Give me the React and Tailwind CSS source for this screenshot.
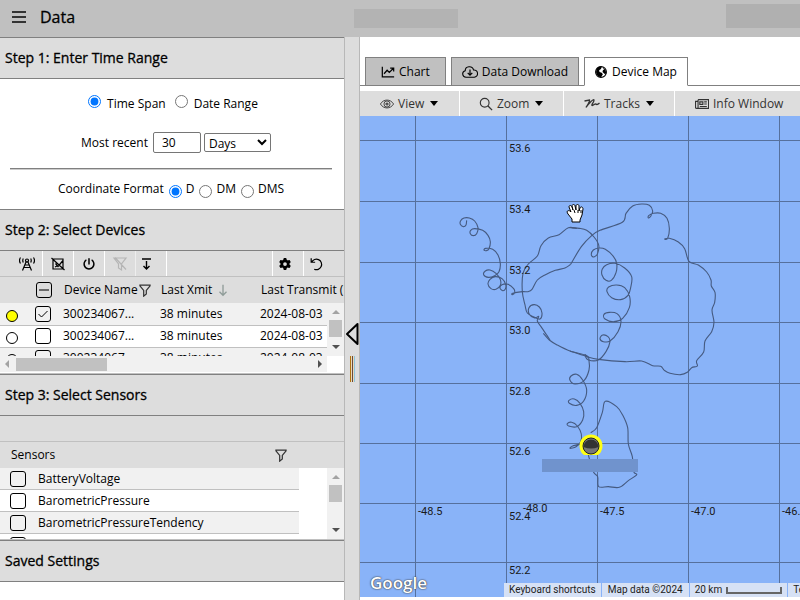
import React, { useState } from 'react';
import clsx from 'clsx';
import { FaGear, FaPowerOff } from 'react-icons/fa6';

const devices = [
  { id: 1, name: '300234067...', xmit: '38 minutes', date: '2024-08-03', active: true },
  { id: 2, name: '300234067...', xmit: '38 minutes', date: '2024-08-03', active: false },
  { id: 3, name: '300234067...', xmit: '38 minutes', date: '2024-08-03', active: false }
];

const sensors = ['BatteryVoltage', 'BarometricPressure', 'BarometricPressureTendency', 'AirTemperature'];

const meridians = [55, 146, 237, 328, 419];
const parallels = [24, 85, 146, 206, 267, 327, 387, 446];

const gridLabels = [
  ['53.6', 149, 36], ['53.4', 149, 97], ['53.2', 149, 158], ['53.0', 149, 218],
  ['52.8', 149, 279], ['52.6', 149, 339], ['52.4', 149, 404], ['52.2', 149, 458],
  ['-48.5', 58, 399], ['-48.0', 163, 396], ['-47.5', 240, 399], ['-47.0', 331, 399], ['-46.5', 422, 399]
];

// Drifter positions, in thirds of a map pixel from each track's origin
const tracks = [
  {
    origin: 'translate(80 79) scale(0.33333)',
    points: [
      [80, 76], [78, 90], [70, 95], [61, 88], [62, 77], [72, 69], [88, 69], [104, 78], [114, 98], [110, 116], [100, 122],
      [91, 116], [92, 106], [104, 101], [128, 106], [144, 121], [151, 140], [147, 161], [139, 167], [132, 165],
      [137, 160], [158, 163], [174, 180], [181, 206], [177, 230], [164, 242], [145, 247], [131, 239], [136, 228],
      [150, 225], [168, 235], [181, 254], [181, 271], [168, 283], [153, 281], [144, 267], [150, 253], [166, 245],
      [186, 251], [197, 268], [196, 282], [188, 287], [180, 279], [186, 269], [204, 268], [221, 281], [224, 293],
      [217, 299], [218, 295], [247, 290], [264, 290], [276, 283], [292, 255], [315, 240], [346, 226], [375, 219], [392, 208]
    ]
  },
  {
    origin: 'translate(80 79) scale(0.33333)',
    points: [
      [410, 100], [385, 98], [357, 119], [325, 129], [303, 152], [292, 183], [265, 207], [249, 235], [247, 290], [255, 330],
      [262, 354], [282, 366], [300, 372], [306, 354], [298, 336], [282, 329], [267, 338], [268, 358], [284, 369],
      [296, 364], [292, 378], [305, 398], [320, 420], [330, 435]
    ]
  },
  {
    origin: 'translate(210 79) scale(0.33333)',
    points: [
      [2, 208], [34, 155], [65, 122], [90, 106], [157, 82], [168, 55], [188, 33], [215, 27], [238, 31], [248, 48], [242, 64],
      [235, 69], [236, 62], [250, 55], [272, 55], [291, 70], [298, 100], [293, 130], [284, 132], [298, 130], [325, 141],
      [344, 161], [357, 199], [385, 210], [410, 231], [423, 255], [424, 273], [435, 292], [434, 322], [426, 345],
      [432, 382], [425, 410], [405, 438], [401, 471], [380, 497], [382, 513], [365, 518], [352, 532], [332, 539],
      [300, 535], [283, 526], [272, 514], [248, 512], [215, 498], [165, 500], [85, 493], [48, 484], [0, 468]
    ]
  },
  {
    origin: 'translate(210 79) scale(0.33333)',
    points: [
      [20, 100], [0, 98], [28, 100], [50, 106], [72, 126], [86, 150], [83, 175], [72, 186], [64, 180], [70, 165], [88, 159],
      [106, 163], [130, 184], [140, 205], [138, 233], [124, 256], [108, 256], [96, 240], [97, 222], [110, 209],
      [135, 205], [164, 219], [185, 245], [182, 278], [174, 301], [152, 314], [125, 308], [111, 290], [116, 276],
      [140, 270], [164, 278], [179, 305], [178, 338], [158, 370], [132, 380], [105, 372], [102, 358], [118, 352],
      [141, 356], [153, 378], [144, 410], [120, 438], [100, 440], [90, 431], [98, 420], [114, 425], [120, 440],
      [108, 470], [85, 495], [54, 494], [45, 479], [55, 487]
    ]
  },
  {
    origin: 'translate(160 224) scale(0.33333)',
    points: [
      [70, -20], [88, 0], [110, 14], [150, 33], [200, 47], [207, 62], [207, 90], [192, 122], [165, 132], [150, 121],
      [153, 108], [170, 103], [188, 120], [200, 150], [191, 183], [170, 196], [148, 190], [147, 181], [163, 177],
      [180, 190], [191, 215], [188, 240], [170, 260], [146, 258], [142, 251], [155, 247], [172, 258], [184, 282],
      [182, 305], [168, 320], [150, 325], [158, 318], [182, 312]
    ]
  },
  {
    origin: 'translate(160 224) scale(0.33333)',
    points: [
      [212, 278], [230, 263], [247, 217], [256, 184], [290, 200], [308, 225], [323, 263], [325, 312], [337, 350], [341, 395],
      [350, 404], [325, 422], [298, 442], [265, 440], [236, 440], [233, 410], [220, 395], [205, 345]
    ]
  }
];

// Catmull-Rom spline through the points
const toPath = (points) => {
  let d = `M${points[0][0]} ${points[0][1]}`;
  for (let i = 0; i < points.length - 1; i++) {
    const p0 = points[i - 1] || points[i];
    const p1 = points[i];
    const p2 = points[i + 1];
    const p3 = points[i + 2] || p2;
    d += ` C${p1[0] + (p2[0] - p0[0]) / 6} ${p1[1] + (p2[1] - p0[1]) / 6}`;
    d += ` ${p2[0] - (p3[0] - p1[0]) / 6} ${p2[1] - (p3[1] - p1[1]) / 6} ${p2[0]} ${p2[1]}`;
  }
  return d;
};

const Icon = ({ children, className = 'size-4' }) => (
  <svg
    viewBox="0 0 16 16"
    className={clsx('shrink-0', className)}
    fill="none"
    stroke="currentColor"
    strokeWidth="1.2"
    aria-hidden="true"
  >
    {children}
  </svg>
);

const FunnelIcon = () => (
  <Icon className="size-3.5 text-[#333]">
    <path d="M1.5 2.5h13M2 3l4.500 5.500V15l3-2.500v-4L14 3" strokeWidth="1.400" />
  </Icon>
);

const SectionTitle = ({ children }) => (
  <h2 className="flex h-[42px] items-center border-y border-[#808080] bg-[#ddd] px-[5px] text-sm font-medium [-webkit-text-stroke:0.3px_#000]">
    {children}
  </h2>
);

const CheckBox = ({ id, label, checked, partial, onChange }) => (
  <div className="relative size-4">
    <input
      id={id}
      type="checkbox"
      aria-label={label}
      checked={checked}
      onChange={onChange}
      className="block size-4 appearance-none rounded-[3px] border border-black bg-transparent"
    />
    {(checked || partial) && (
      <Icon className="pointer-events-none absolute inset-0 size-4">
        {partial ? <path d="M3 8h10" strokeWidth="1.500" stroke="#444" /> : <path d="m3.500 8 3 3 6-6" strokeWidth="1" />}
      </Icon>
    )}
  </div>
);

const VerticalScrollbar = () => (
  <div className="flex h-full w-[17px] shrink-0 flex-col items-center justify-between bg-[#f1f1f1] py-[7px]" aria-hidden="true">
    <div className="flex flex-col items-center gap-1.5">
      <svg viewBox="0 0 8 4" className="h-1 w-2"><path d="M0 4 4 0l4 4z" fill="#a3a3a3" /></svg>
      <div className="h-[17px] w-[13px] bg-[#c1c1c1]" />
    </div>
    <svg viewBox="0 0 8 4" className="h-1 w-2"><path d="m0 0 4 4 4-4z" fill="#505050" /></svg>
  </div>
);

const ToolButton = ({ label, className, children }) => (
  <button type="button" aria-label={label} className={clsx('flex h-full items-center justify-center', className)}>
    {children}
  </button>
);

const TimeRange = () => {
  const [mode, setMode] = useState('span');
  const [format, setFormat] = useState('D');

  return (
    <div className="flex h-[130px] flex-col items-center pt-[15px] pr-3 pl-2.5">
      <div className="ml-1 flex h-5 items-center gap-[9px]">
        <label className="flex items-end gap-1.5">
          <input type="radio" name="mode" className="mb-[5px] size-[13px]" checked={mode === 'span'} onChange={() => setMode('span')} />
          Time Span
        </label>
        <label className="flex items-end gap-1.5">
          <input type="radio" name="mode" className="mb-[5px] size-[13px]" checked={mode === 'date'} onChange={() => setMode('date')} />
          Date Range
        </label>
      </div>
      <div className="mt-[18px] ml-2.5 flex h-[21px] items-center">
        <label htmlFor="amount" className="mr-[5px]">Most recent</label>
        <input id="amount" type="text" defaultValue="30" className="mr-[3px] h-[21px] w-12 rounded-[2px] border border-[#767676] px-2" />
        <select aria-label="Unit" className="h-[19px] w-[67px] rounded-[2px] border border-[#767676] bg-white leading-4">
          <option>Days</option>
          <option>Hours</option>
        </select>
      </div>
      <hr className="mt-[15px] h-0.5 w-full border-t border-b border-t-[#808080] border-b-[#ccc]" />
      <fieldset className="mt-2.5 flex h-5 items-center gap-[5px]">
        <legend className="contents">Coordinate Format</legend>
        {['D', 'DM', 'DMS'].map((f) => (
          <label key={f} className="flex items-center gap-1">
            <input type="radio" name="format" className="mt-1 size-[13px]" checked={format === f} onChange={() => setFormat(f)} />
            {f}
          </label>
        ))}
      </fieldset>
    </div>
  );
};

const DeviceList = () => {
  const [selected, setSelected] = useState([1]);

  const toggle = (id) => {
    setSelected(selected.includes(id) ? selected.filter((s) => s !== id) : [...selected, id]);
  };

  return (
    <div className="h-[123px] overflow-hidden border-b border-[#c0c0c0]">
      <div className="flex h-[26px] border-b border-[#c0c0c0] bg-[#ddd]">
        <ToolButton label="Transmit" className="w-[43px] border-r border-white pl-3">
          <Icon>
            <path d="M3.500 14.500 7 6h2l3.500 8.500M5 11.500h6M6 9h4" />
            <circle cx="8" cy="4.500" r="1.500" />
            <path d="M1.500 1.500C.2 3.500.2 5.500 1.500 7.500M14.500 1.500c1.300 2 1.300 4 0 6M4.300 2.500c-.7 1.300-.7 2.700 0 4M11.700 2.500c.7 1.300.7 2.700 0 4" />
          </Icon>
        </ToolButton>
        <ToolButton label="Clear selection" className="w-[31px] border-r border-white">
          <Icon><path d="M3 3h10v10H3zM1.500 2l13 12M5.500 7.500l2.500 3 5-6M5 11l2-1" /></Icon>
        </ToolButton>
        <ToolButton label="Power" className="w-[31px] border-r border-white"><FaPowerOff size={12} /></ToolButton>
        <ToolButton label="Clear filter" className="w-[31px] border-r border-[#eee] text-[#b5b5b5]">
          <Icon><path d="M2 2h12L9.500 8v6l-3-2V8zM3 1.500l11 12" /></Icon>
        </ToolButton>
        <ToolButton label="Collapse" className="w-[31px] border-r border-white pr-2.5">
          <Icon><path d="M4 3h9M8.500 5v8M5.500 10l3 3 3-3" strokeWidth="1.400" /></Icon>
        </ToolButton>
        <ToolButton label="Settings" className="ml-auto w-8 border-x border-white pr-1.5"><FaGear size={12} /></ToolButton>
        <ToolButton label="Reset" className="w-10 pr-4">
          <Icon className="size-3.5"><path d="M2.500 1.500V6H7M3 6a6 6 0 1 1 3 8" strokeWidth="1.400" /></Icon>
        </ToolButton>
      </div>
      <div className="relative">
        <div className="h-[79px] overflow-hidden">
          <table className="w-[400px] table-fixed">
            <colgroup>
              <col className="w-[35px]" />
              <col className="w-7" />
              <col className="w-[97px]" />
              <col className="w-[100px]" />
              <col />
            </colgroup>
            <thead>
              <tr className="h-[26px] bg-[#ddd] text-left whitespace-nowrap">
                <td />
                <td className="pl-px"><CheckBox label="Select all devices" checked={false} partial onChange={() => setSelected([])} /></td>
                <th className="pl-px font-normal"><span className="flex items-center">Device Name<FunnelIcon /></span></th>
                <th className="pl-px font-normal">
                  <span className="flex items-center gap-1">
                    Last Xmit
                    <Icon className="size-3.5 text-[#8f9c98]"><path d="M8 2v12M4 10l4 4 4-4" strokeWidth="1.500" /></Icon>
                  </span>
                </th>
                <th className="pl-px font-normal">Last Transmit (UTC)</th>
              </tr>
            </thead>
            <tbody>
              {devices.map((device) => (
                <tr key={device.id} className="h-[22px] border-b border-[#c0c0c0] bg-white odd:bg-[#f1f1f1]">
                  <td className="pt-1 pl-1.5">
                    <div className={clsx('size-3 rounded-full border border-black', device.active && 'bg-[#ff0]')} />
                  </td>
                  <td><CheckBox label={device.name} checked={selected.includes(device.id)} onChange={() => toggle(device.id)} /></td>
                  <td>{device.name}</td>
                  <td>{device.xmit}</td>
                  <td>{device.date}</td>
                </tr>
              ))}
            </tbody>
          </table>
        </div>
        <div className="absolute top-[26px] right-0 bottom-0">
          <VerticalScrollbar />
        </div>
      </div>
      <div className="mr-[17px] flex h-4 items-center bg-[#f1f1f1] px-[5px]" aria-hidden="true">
        <svg viewBox="0 0 4 8" className="h-2 w-1"><path d="M4 0 0 4l4 4z" fill="#a3a3a3" /></svg>
        <div className="ml-[7px] h-[13px] w-[91px] bg-[#c1c1c1]" />
        <svg viewBox="0 0 4 8" className="ml-auto h-2 w-1"><path d="m0 0 4 4-4 4z" fill="#505050" /></svg>
      </div>
    </div>
  );
};

const SensorList = () => {
  const [selected, setSelected] = useState([]);

  const toggle = (name) => {
    setSelected(selected.includes(name) ? selected.filter((s) => s !== name) : [...selected, name]);
  };

  return (
    <div className="flex h-[124px] flex-col border-b border-[#c0c0c0]">
      <div className="h-[26px] shrink-0 border-b border-[#c0c0c0] bg-[#ddd]" />
      <div className="flex h-[26px] shrink-0 items-center justify-between bg-[#ddd] pr-14 pl-[11px]">
        Sensors
        <FunnelIcon />
      </div>
      <div className="flex min-h-0 flex-1">
        <ul className="flex-1 overflow-hidden">
          {sensors.map((name) => (
            <li key={name} className="mr-7 flex h-[22px] items-center gap-3 border-b border-[#c0c0c0] bg-white pl-2.5 odd:bg-[#f1f1f1]">
              <CheckBox id={name} checked={selected.includes(name)} onChange={() => toggle(name)} />
              <label htmlFor={name}>{name}</label>
            </li>
          ))}
        </ul>
        <VerticalScrollbar />
      </div>
    </div>
  );
};

const Caret = () => (
  <svg viewBox="0 0 8 5" className="h-[5px] w-2" aria-hidden="true"><path d="M0 0h8L4 5z" fill="#000" /></svg>
);

const DeviceMap = () => (
  <div className="relative min-h-0 flex-1 overflow-hidden bg-[#89b3f8]">
    <svg className="absolute inset-0 h-full w-full" role="img" aria-label="Drifter tracks">
      <g stroke="#56709c" strokeWidth="1" shapeRendering="crispEdges">
        {meridians.map((x) => <line key={x} x1={x + 0.5} x2={x + 0.5} y1="0" y2="100%" />)}
        {parallels.map((y) => <line key={y} x1="0" x2="100%" y1={y + 0.5} y2={y + 0.5} />)}
      </g>
      <g fill="none" stroke="#455a80" strokeWidth="3.300" strokeLinejoin="round">
        {tracks.map((track, i) => <path key={i} transform={track.origin} d={toPath(track.points)} />)}
      </g>
      <g className="font-['Roboto',sans-serif] text-[11px]" fill="#1a1a1a">
        {gridLabels.map(([text, x, y]) => <text key={text} x={x} y={y}>{text}</text>)}
      </g>
      <path d="M224 339a11.500 11.500 0 1 1 14 0z" fill="#ffff14" />
      <circle cx="231" cy="330" r="8" fill="#777" stroke="#222" />
      <path d="M223.500 331a7.500 7.500 0 1 1 15 0q-7.500 3-15 0z" fill="#333" />
      <rect x="182" y="343" width="96" height="13" fill="#7093cd" />
      <path
        d="M212 106v-3l-4-5c-2-3 0-4 2-3l1 1-2-5c0-2 2-2 3 0l1 3-1-4c0-2 3-2 3 0l1 4v-4c0-2 3-2 3 0v5l1-3c1-2 3-1 3 1l-1 6-2 5v2z"
        fill="#fff"
        stroke="#000"
      />
      <path d="M214 94l1 3M218 94v3M221 94v3" stroke="#000" />
    </svg>
    <span className="absolute bottom-0.5 left-2.5 font-['Open_Sans',sans-serif] text-[17px] leading-6 font-semibold text-white [text-shadow:0_0_1px_#333,0_0_2px_#444]">
      Google
    </span>
    <div className="absolute bottom-0 left-36 flex h-3.5 gap-px font-['Roboto',sans-serif] text-[10px] leading-[14px] whitespace-nowrap text-[#222]">
      <button type="button" className="bg-[#d6e1f5] px-[5px]">Keyboard shortcuts</button>
      <span className="bg-[#d6e1f5] px-1.5">Map data ©2024</span>
      <button type="button" className="flex items-center gap-1 bg-[#d6e1f5] px-[5px]">
        20 km
        <span className="h-[7px] w-14 border-2 border-t-0 border-[#666]" />
      </button>
      <a href="#terms" className="bg-[#d6e1f5] px-[5px]">Terms</a>
    </div>
  </div>
);

const tabClass = 'flex h-[29px] items-center border border-[#808080]';
const menuClass = 'flex items-center border-r border-white';

const App = () => (
  <div className="flex h-screen min-h-[600px] flex-col overflow-hidden bg-white font-['Open_Sans',sans-serif] text-xs leading-[18px] text-black">
    <header className="flex h-[37px] shrink-0 items-center bg-[#c0c0c0] pb-1 pl-3">
      <button type="button" aria-label="Menu" className="flex h-3 w-3.5 flex-col justify-between">
        <span className="h-0.5 w-full bg-[#333]" />
        <span className="h-0.5 w-full bg-[#333]" />
        <span className="h-0.5 w-full bg-[#333]" />
      </button>
      <h1 className="ml-3.5 w-[314px] text-base font-medium [-webkit-text-stroke:0.3px_#000]">Data</h1>
      <div className="mt-1 h-[19px] w-[104px] bg-[#b3b3b3]" />
      <div className="mb-px ml-auto h-6 w-[74px] bg-[#b0b0b0]" />
    </header>

    <div className="flex min-h-0 flex-1">
      <aside className="w-[43%] shrink-0">
        <SectionTitle>Step 1: Enter Time Range</SectionTitle>
        <TimeRange />
        <SectionTitle>Step 2: Select Devices</SectionTitle>
        <DeviceList />
        <SectionTitle>Step 3: Select Sensors</SectionTitle>
        <SensorList />
        <SectionTitle>Saved Settings</SectionTitle>
      </aside>

      <div className="flex w-4 shrink-0 flex-col items-center justify-center gap-2.5 border-x border-[#b8b8b8] bg-[#ddd] pt-[67px]">
        <button type="button" aria-label="Collapse panel">
          <svg viewBox="0 0 14 24" className="block h-6 w-3.5">
            <path d="M12.500 2v20L2 12z" fill="#ddd" stroke="#000" strokeWidth="2" strokeLinejoin="round" />
          </svg>
        </button>
        <div className="h-[26px] w-[5px] border-r border-l border-r-[#8cc4dc] border-l-[#b07410] bg-[#e8d9bd] pl-px">
          <div className="h-full w-px bg-[#6a4a3a]" />
        </div>
      </div>

      <main className="flex min-w-0 flex-1 flex-col pb-[3px]">
        <div className="flex shrink-0 pt-5" role="tablist">
          <div className="w-[5px] border-b border-[#808080]" />
          <button type="button" role="tab" aria-selected="false" className={clsx(tabClass, 'gap-1 bg-[#c0c0c0] px-[15px]')}>
            <Icon className="size-3.5"><path d="M1.500 2v11.500H15M3.500 10 7 6l2.500 2.500L14 4M10.500 3.500h4v4" strokeWidth="1.400" /></Icon>
            Chart
          </button>
          <div className="w-[5px] border-b border-[#808080]" />
          <button type="button" role="tab" aria-selected="false" className={clsx(tabClass, 'gap-1 bg-[#c0c0c0] px-2.5')}>
            <Icon>
              <path d="M4 13.200a3.300 3.300 0 0 1-.8-6.500C3.200 1.800 10.500 1.300 11.500 6a3.600 3.600 0 0 1 .8 7.200z" strokeWidth="1.100" />
              <path d="M8 5.500v5.500M5.700 8.800 8 11.200l2.300-2.400" />
            </Icon>
            Data Download
          </button>
          <div className="w-[5px] border-b border-[#808080]" />
          <button type="button" role="tab" aria-selected="true" className={clsx(tabClass, 'gap-[5px] border-b-transparent bg-white px-2.5')}>
            <Icon className="size-3">
              <circle cx="8" cy="8" r="7.200" strokeWidth="1.500" />
              <path d="M2 4c2-3 5-3.500 7-3L8 4 5.500 5.500 6 8l3 1 1.500 2L8 15c-4-.5-7-4-6.500-8zM10 2l4 3 1 5-2 .5L10 8l.5-2.500L12 5z" fill="currentColor" stroke="none" />
            </Icon>
            Device Map
          </button>
          <div className="flex-1 border-b border-[#808080]" />
        </div>

        <div className="mt-[5px] flex h-[25px] shrink-0 overflow-hidden bg-[#ddd] whitespace-nowrap text-[#333]">
          <button type="button" className={clsx(menuClass, 'w-[100px] gap-1 pl-5')}>
            <Icon className="size-3.5">
              <path d="M.5 8c3.500-6 11.500-6 15 0-3.500 6-11.500 6-15 0z" strokeWidth="1" />
              <circle cx="8" cy="8" r="3.500" strokeWidth="1" />
              <circle cx="8" cy="8" r="1.200" />
            </Icon>
            <span className="mr-0.5">View</span>
            <Caret />
          </button>
          <button type="button" className={clsx(menuClass, 'w-[104px] gap-1 pl-[19px]')}>
            <Icon className="size-3.5"><circle cx="6.500" cy="6.500" r="5" strokeWidth="1.300" /><path d="m10 10 5 5" strokeWidth="1.500" /></Icon>
            <span className="mr-0.5">Zoom</span>
            <Caret />
          </button>
          <button type="button" className={clsx(menuClass, 'w-[111px] gap-1 pl-5')}>
            <Icon><path d="M.5 5 5.500 4C6 5.500 3.500 9 2 11.500 4.500 7.500 9.500 2.500 10 4c.3 2-3 5-2 5.500C9.500 10 11 7 12 8c.8 1 2 .3 3.500-1" strokeWidth="1.300" /></Icon>
            <span className="mr-0.5">Tracks</span>
            <Caret />
          </button>
          <button type="button" className="flex flex-1 items-center gap-1 pl-5">
            <Icon className="size-3.5">
              <path d="M3.500 3h12v10H2C1 13 .6 12.500.6 12V5h3M3.500 3v9c0 .6-.5 1-1.200 1" strokeWidth="1.300" />
              <path d="M5.500 5.500h3.500v3H5.500zM10.500 5.500h3M10.500 8h3M5.500 10.800h8" strokeWidth="1.300" />
            </Icon>
            Info Window
          </button>
        </div>

        <DeviceMap />
      </main>
    </div>
  </div>
);

export default App;
